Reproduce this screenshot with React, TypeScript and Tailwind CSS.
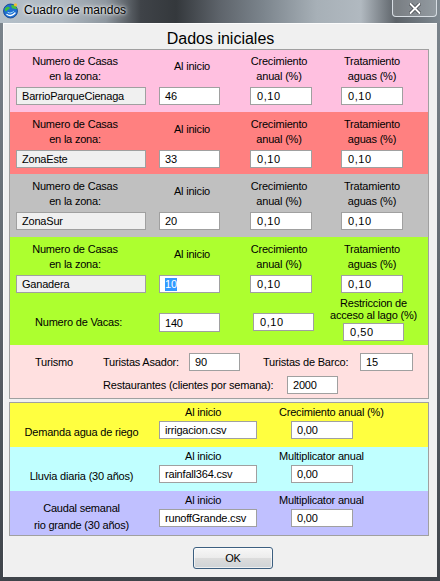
import type { ReactNode } from "react";

type FieldProps = {
  value: ReactNode;
  className?: string;
  readOnly?: boolean;
  spaced?: boolean;
};

// Win7-style single line text box
function Field({ value, className = "", readOnly = false, spaced = false }: FieldProps) {
  return (
    <div
      className={`flex h-[18px] shrink-0 items-center border border-[#a0a0a0] pl-[5px] leading-[14px] ${
        readOnly ? "bg-[#f0f0f0]" : "bg-white"
      } ${spaced ? "pl-[6px] tracking-[0.6px]" : ""} ${className}`}
    >
      {value}
    </div>
  );
}

type ZoneProps = {
  bg: string;
  size: string;
  name: string;
  inicio: ReactNode;
  crec: string;
  trat: string;
  children?: ReactNode;
};

function HouseZone({ bg, size, name, inicio, crec, trat, children }: ZoneProps) {
  return (
    <div className={`${bg} ${size}`}>
      <div className="flex pl-[6px]">
        <div className="flex w-[130px] flex-col">
          <div className="flex h-[30px] flex-col items-center whitespace-nowrap pr-[12px] leading-[15px]">
            <span>Numero de Casas</span>
            <span>en la zona:</span>
          </div>
          <Field readOnly value={name} className="mt-[3px] w-[130px]" />
        </div>
        <div className="ml-[13px] flex w-[61px] flex-col">
          <div className="h-[30px] whitespace-nowrap pl-[5px] pt-[5px] text-center leading-[15px]">Al inicio</div>
          <Field value={inicio} className="mt-[3px] w-[61px]" />
        </div>
        <div className="ml-[30px] flex w-[62px] flex-col">
          <div className="flex h-[30px] flex-col items-center whitespace-nowrap pr-[4px] leading-[15px]">
            <span>Crecimiento</span>
            <span>anual (%)</span>
          </div>
          <Field spaced value={crec} className="mt-[3px] w-[62px]" />
        </div>
        <div className="ml-[29px] flex w-[62px] flex-col">
          <div className="flex h-[30px] flex-col items-center whitespace-nowrap leading-[15px]">
            <span>Tratamiento</span>
            <span>aguas (%)</span>
          </div>
          <Field spaced value={trat} className="mt-[3px] w-[62px]" />
        </div>
      </div>
      {children}
    </div>
  );
}

type SeriesProps = {
  bg: string;
  label: ReactNode;
  file: string;
  right: string;
  value: string;
};

function SeriesRow({ bg, label, file, right, value }: SeriesProps) {
  return (
    <div className={`flex h-[44px] ${bg}`}>
      <div className="flex w-[143px] flex-col items-center justify-center whitespace-nowrap pt-[15px] text-center leading-[17px]">
        {label}
      </div>
      <div className="ml-[6px] flex w-[98px] flex-col">
        <div className="h-[15px] whitespace-nowrap pl-[26px] pt-[2px] leading-[15px]">Al inicio</div>
        <Field value={file} className="mt-[3px] w-[98px]" />
      </div>
      <div className="ml-[22px] flex flex-col">
        <div className="h-[15px] whitespace-nowrap pt-[2px] leading-[15px]">{right}</div>
        <Field value={value} className="ml-[12px] mt-[3px] w-[62px]" />
      </div>
    </div>
  );
}

function AppIcon() {
  return (
    <svg width="17" height="17" viewBox="0 0 17 17">
      <circle cx="8.5" cy="9" r="7" fill="#1f6fd1" stroke="#0d3f8a" strokeWidth="0.8" />
      <path d="M3 6.5 C5 4 7 4.5 8 6 C7 8 5 7.5 4 9.5 C3 9 2.6 7.6 3 6.5 Z" fill="#3fbf3a" />
      <path d="M9.5 3 C12 2.6 14.5 4.5 15 7 C13.5 7.5 12 6 10.5 6.5 C9.5 5.5 9 4 9.5 3 Z" fill="#45c23d" />
      <path d="M5 12.5 C7 14 10.5 14 13 11" fill="none" stroke="#ffffff" strokeWidth="1.4" strokeLinecap="round" />
      <path d="M6 10.5 C8 11.5 10 11 11.5 9.5" fill="none" stroke="#a6e3ff" strokeWidth="1" strokeLinecap="round" />
      <circle cx="13.5" cy="2.8" r="1.6" fill="#f2c12e" />
    </svg>
  );
}

export default function App() {
  return (
    <div className="font-['Liberation_Sans',Arial,sans-serif] text-[11px] tracking-[-0.2px] text-black">
      <div className="flex h-[581px] w-[440px] flex-col bg-[linear-gradient(180deg,#7d868e_0%,#5f666d_50%,#3f444a_100%)]">
        {/* title bar */}
        <div className="relative flex h-[23px] shrink-0 items-center bg-[linear-gradient(90deg,#b4bfc8_0%,#aeb8c1_14%,#8e979f_24%,#3f4348_32%,#34383c_40%,#5e646b_50%,#7c858d_60%,#a7b0b7_72%,#b1b9c0_82%,#5c6268_90%,#7f8991_100%)]">
          <div className="ml-[2px] mt-[-2px]">
            <AppIcon />
          </div>
          <span className="ml-[5px] mt-[-3px] text-[12px] tracking-normal [text-shadow:0_0_6px_#ffffff,0_0_3px_#ffffff]">
            Cuadro de mandos
          </span>
          <div className="absolute right-[3px] top-0 flex h-[17px] w-[45px] items-center justify-center rounded-b-[4px] border border-t-0 border-[#d7dde3] bg-[#ffffff2e]">
            <svg width="12" height="11" viewBox="0 0 12 11">
              <path d="M1.5 1 L10.5 10 M10.5 1 L1.5 10" stroke="#3a3f45" strokeWidth="3.4" strokeLinecap="round" />
              <path d="M1.5 1 L10.5 10 M10.5 1 L1.5 10" stroke="#ffffff" strokeWidth="2" strokeLinecap="round" />
            </svg>
          </div>
        </div>

        <div className="flex flex-1">
          {/* client area */}
          <div className="ml-[3px] mr-[3px] flex h-[554px] w-[434px] flex-col border-l border-t border-[#fbfbfb] bg-[#f0f0f0]">
            <div className="pt-[5px] text-center text-[16px] leading-[20px] tracking-normal">Dados iniciales</div>

            <div className="ml-[5px] w-[420px] border border-[#a0a0a0]">
              <HouseZone bg="bg-[#ffc0e0]" size="h-[62px] pt-[4px]" name="BarrioParqueCienaga" inicio="46" crec="0,10" trat="0,10" />
              <HouseZone bg="bg-[#ff8080]" size="h-[62px] pt-[5px]" name="ZonaEste" inicio="33" crec="0,10" trat="0,10" />
              <HouseZone bg="bg-[#c0c0c0]" size="h-[63px] pt-[5px]" name="ZonaSur" inicio="20" crec="0,10" trat="0,10" />
              <HouseZone
                bg="bg-[#adff2f]"
                size="h-[108px] pt-[5px]"
                name="Ganadera"
                inicio={<span className="bg-[#3399ff] leading-[13px] text-white">10</span>}
                crec="0,10"
                trat="0,10"
              >
                <div className="mt-[4px] flex pl-[25px]">
                  <div className="mt-[16px] flex h-[19px]">
                    <span className="flex w-[124px] items-center whitespace-nowrap">Numero de Vacas:</span>
                    <Field value="140" className="h-[19px] w-[61px]" />
                    <Field spaced value="0,10" className="ml-[33px] w-[61px]" />
                  </div>
                  <div className="ml-[29px] flex w-[61px] flex-col items-center">
                    <div className="flex flex-col items-center whitespace-nowrap leading-[12px]">
                      <span>Restriccion de</span>
                      <span>acceso al lago (%)</span>
                    </div>
                    <Field spaced value="0,50" className="mt-[2px] w-[61px]" />
                  </div>
                </div>
              </HouseZone>
              <div className="h-[53px] bg-[#ffe0e0] pt-[8px]">
                <div className="flex h-[18px] items-center pl-[25px]">
                  <span className="w-[68px]">Turismo</span>
                  <span className="w-[86px] whitespace-nowrap">Turistas Asador:</span>
                  <Field value="90" className="w-[51px]" />
                  <span className="ml-[23px] w-[97px] whitespace-nowrap">Turistas de Barco:</span>
                  <Field value="15" className="w-[53px]" />
                </div>
                <div className="mt-[5px] flex h-[18px] items-center pl-[93px]">
                  <span className="w-[184px] whitespace-nowrap">Restaurantes (clientes por semana):</span>
                  <Field value="2000" className="w-[51px]" />
                </div>
              </div>
            </div>

            <div className="ml-[5px] mt-[3px] w-[420px] border border-[#a0a0a0]">
              <SeriesRow
                bg="bg-[#ffff40]"
                label="Demanda agua de riego"
                file="irrigacion.csv"
                right="Crecimiento anual (%)"
                value="0,00"
              />
              <SeriesRow
                bg="bg-[#c0ffff]"
                label="Lluvia diaria (30 años)"
                file="rainfall364.csv"
                right="Multiplicator anual"
                value="0,00"
              />
              <SeriesRow
                bg="bg-[#c0c0ff]"
                label={
                  <span className="-mt-[7px] flex flex-col items-center">
                    <span>Caudal semanal</span>
                    <span>rio grande (30 años)</span>
                  </span>
                }
                file="runoffGrande.csv"
                right="Multiplicator anual"
                value="0,00"
              />
            </div>

            <div className="mt-[11px] flex justify-center pl-[25px]">
              <button className="h-[22px] w-[80px] rounded-[3px] border border-[#3c5f80] bg-[linear-gradient(180deg,#f7f7f7_0%,#ececec_48%,#dcdcdc_52%,#cfd3d6_100%)] text-[11px] shadow-[inset_0_0_0_1px_#ffffffa0]">
                OK
              </button>
            </div>
          </div>
        </div>
      </div>
    </div>
  );
}
